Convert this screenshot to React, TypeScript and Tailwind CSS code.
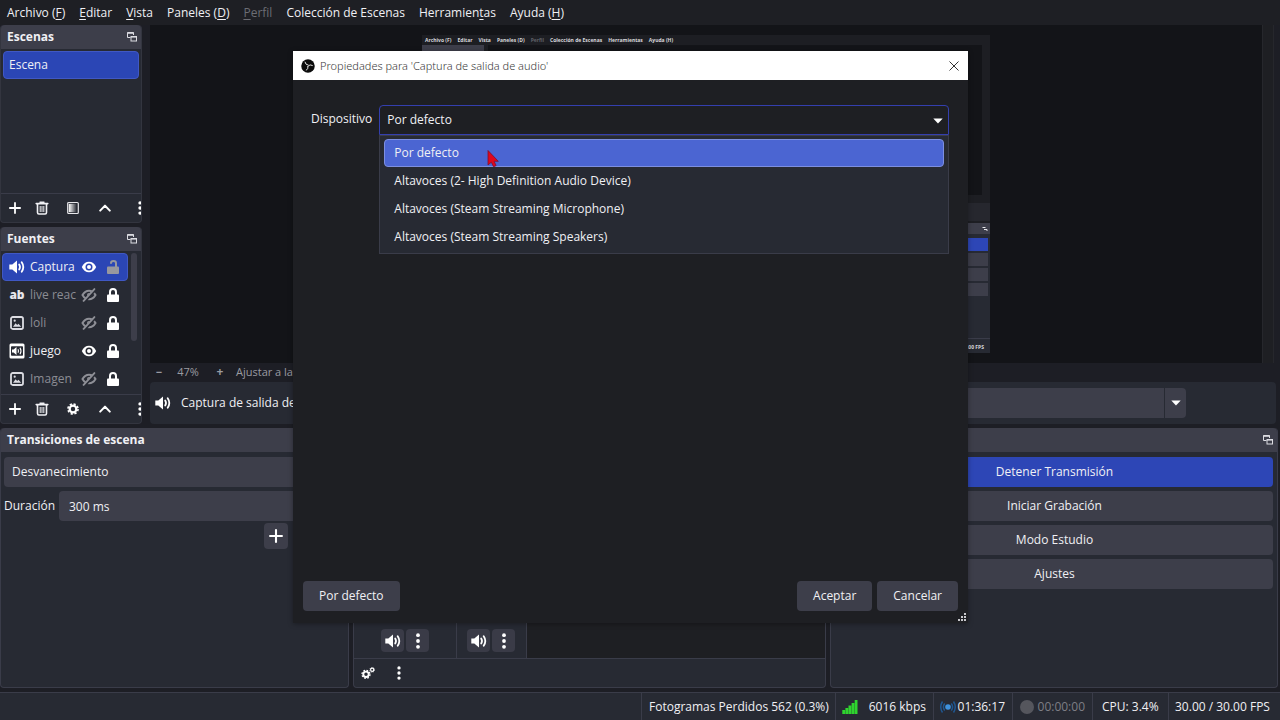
import React from "react";

type IconProps = { className?: string };

function PopOut({ className = "" }: IconProps) {
  return (
    <svg viewBox="0 0 10 10" className={`h-2.5 w-2.5 ${className}`} fill="none" stroke="#dcdce2">
      <path d="M3.5 5.5h-3v-5h6v2.5" />
      <path d="M0.5 1h6" strokeWidth="1.6" />
      <rect x="4" y="4.5" width="5.5" height="4.5" />
      <path d="M4 4.8h5.5" strokeWidth="1.6" />
    </svg>
  );
}

function Plus({ className = "h-3 w-3" }: IconProps) {
  return (
    <svg viewBox="0 0 12 12" className={className} stroke="#fff" strokeWidth="1.8" strokeLinecap="round">
      <path d="M6 .9v10.2M.9 6h10.2" />
    </svg>
  );
}

function Trash() {
  return (
    <svg viewBox="0 0 14 14" className="h-3.5 w-3.5" fill="none" stroke="#f0f0f4">
      <path d="M1.2 2.6h11.6" strokeWidth="1.6" strokeLinecap="round" />
      <path d="M5 1.2h4" strokeWidth="1.4" strokeLinecap="round" />
      <path d="M2.5 3v8.6q0 1.4 1.4 1.4h6.2q1.4 0 1.4-1.4V3" strokeWidth="1.6" />
      <path d="M5.2 5v6M7 5v6M8.8 5v6" strokeWidth="1" />
    </svg>
  );
}

function Filter() {
  return (
    <svg viewBox="0 0 14 14" className="h-3.5 w-3.5">
      <defs>
        <linearGradient id="fade">
          <stop offset="0" stopColor="#fff" />
          <stop offset="1" stopColor="#272a33" />
        </linearGradient>
      </defs>
      <rect x="1.7" y="1.5" width="10.6" height="11" rx="1" fill="#272a33" stroke="#e6e6ea" strokeWidth="1.2" />
      <rect x="2.8" y="2.8" width="8" height="8.4" fill="url(#fade)" />
    </svg>
  );
}

function ChevronUp() {
  return (
    <svg viewBox="0 0 12 8" className="h-2 w-3" fill="none" stroke="#fff" strokeWidth="2" strokeLinecap="round" strokeLinejoin="round">
      <path d="M1.2 6.6 6 1.6l4.8 5" />
    </svg>
  );
}

function Dots({ className = "h-3.5 w-1" }: IconProps) {
  return (
    <svg viewBox="0 0 4 16" className={className} fill="#fff">
      <circle cx="2" cy="2.2" r="1.9" />
      <circle cx="2" cy="8" r="1.9" />
      <circle cx="2" cy="13.8" r="1.9" />
    </svg>
  );
}

function Gear({ className = "h-3 w-3" }: IconProps) {
  return (
    <svg viewBox="0 0 14 14" className={className} fill="none" stroke="#fff">
      <circle cx="7" cy="7" r="3.9" strokeWidth="2.6" />
      <circle cx="7" cy="7" r="5.9" strokeWidth="1.8" strokeDasharray="2.6 2.03" />
    </svg>
  );
}

function Gears() {
  return (
    <svg viewBox="0 0 14 12" className="h-3 w-3.5" fill="none" stroke="#fff">
      <circle cx="5" cy="7.3" r="2.7" strokeWidth="1.9" />
      <circle cx="5" cy="7.3" r="4" strokeWidth="1.3" strokeDasharray="1.7 1.44" />
      <circle cx="11.2" cy="2.8" r="1.6" strokeWidth="1.2" />
      <circle cx="11.2" cy="2.8" r="2.4" strokeWidth=".7" strokeDasharray="1 .88" />
    </svg>
  );
}

function Speaker() {
  return (
    <svg viewBox="0 0 16 14" className="h-3.5 w-4 shrink-0" fill="none" stroke="#fff" strokeLinecap="round">
      <path d="M.3 4.4h3L8 .6v12.8L3.300 9.600h-3z" fill="#fff" stroke="none" />
      <path d="M10.200 4.500q1.600 2.500 0 5" strokeWidth="1.800" />
      <path d="M12.700 2.300q3.200 4.700 0 9.400" strokeWidth="1.800" />
    </svg>
  );
}

function BoxSpeaker() {
  return (
    <svg viewBox="0 0 16 16" className="h-4 w-4 shrink-0">
      <rect x=".5" y=".5" width="15" height="15" rx="1.500" fill="#fff" />
      <rect x="2" y="3.200" width="12" height="9.600" rx=".8" fill="#272a33" />
      <path d="M3 6.500h1.600L7.500 4v8L4.600 9.500H3z" fill="#fff" />
      <path d="M9 6.200q1 1.800 0 3.600M11 4.800q2 3.200 0 6.400" fill="none" stroke="#fff" strokeWidth="1.100" />
    </svg>
  );
}

function Picture() {
  return (
    <svg viewBox="0 0 16 16" className="h-4 w-4 shrink-0" fill="none" stroke="#dcdce2">
      <rect x="2" y="2" width="12" height="12" rx="1.800" strokeWidth="1.800" />
      <path d="m4 11.800 2.600-3.600 1.600 1.700 1.200-1.200 2.800 3.100z" fill="#dcdce2" stroke="none" />
      <circle cx="5.700" cy="5.700" r="1.100" fill="#dcdce2" stroke="none" />
    </svg>
  );
}

function Eye({ back }: { back: string }) {
  return (
    <svg viewBox="0 0 16 12" className="h-3 w-4 shrink-0">
      <path d="M.8 6q2.500-5.300 7.200-5.300T15.200 6q-2.500 5.300-7.200 5.300T.8 6z" fill="#fff" />
      <circle cx="8" cy="6" r="3.500" fill={back} />
      <circle cx="8" cy="6" r="2" fill="#fff" />
    </svg>
  );
}

function EyeOff() {
  return (
    <svg viewBox="0 0 16 14" className="h-3.5 w-4 shrink-0" fill="none" stroke="#8e8f96">
      <path d="M1.500 7q2.400-4.300 6.500-4.300t6.500 4.300q-2.400 4.300-6.500 4.300T1.500 7z" strokeWidth="2" />
      <circle cx="8" cy="7" r="2" fill="#8e8f96" stroke="none" />
      <path d="M3.500 13.300 14.400 1.500" stroke="#272a33" strokeWidth="3" />
      <path d="M2.600 12.900 13.400 1.100" strokeWidth="1.900" strokeLinecap="round" />
    </svg>
  );
}

function Lock({ open = false }: { open?: boolean }) {
  const color = open ? "#98989e" : "#fff";
  return (
    <svg viewBox="0 0 12 14" className="h-3.5 w-3 shrink-0" fill="none">
      <rect x="0" y="6.500" width="12" height="7.500" rx="1" fill={color} />
      <path d={open ? "M4 3.800V3q0-2 2.500-2T9 3.300V7" : "M3 7V4q0-3 3-3t3 3v3"} stroke={color} strokeWidth="2" />
    </svg>
  );
}

function ObsLogo() {
  return (
    <svg viewBox="0 0 16 16" className="h-3.5 w-3.5 shrink-0">
      <circle cx="8" cy="8" r="7.700" fill="#0c0c0c" />
      <g fill="none" stroke="#e8e8e8" strokeWidth="1.100" strokeLinecap="round">
        <path d="M4.600 3.600q.2 3 3.600 3.400" />
        <path d="M13 7.300q-2.800-1.800-4.900.8" />
        <path d="M6 12.800q3-1.300 1.900-4.400" />
      </g>
    </svg>
  );
}

function Header({ title, icon = true }: { title: string; icon?: boolean }) {
  return (
    <header className="flex h-6 shrink-0 items-center justify-between rounded-t-sm bg-[#3d3e4a] pr-1 pl-1.5">
      <h2 className="font-bold">{title}</h2>
      {icon && (
        <button aria-label={`Desacoplar ${title}`}>
          <PopOut />
        </button>
      )}
    </header>
  );
}

function Toolbar({ children }: { children: React.ReactNode }) {
  return (
    <div className="flex h-[29px] shrink-0 items-center overflow-hidden border-t border-[#3a3c49]">{children}</div>
  );
}

function Tool({ label, children, className = "w-[27px]" }: { label: string; children: React.ReactNode; className?: string }) {
  return (
    <button aria-label={label} className={`flex h-7 shrink-0 items-center justify-center ${className}`}>
      {children}
    </button>
  );
}

function Square({ label, children }: { label: string; children: React.ReactNode }) {
  return (
    <button aria-label={label} className="flex h-[23px] w-[23px] items-center justify-center rounded bg-[#3a3b47]">
      {children}
    </button>
  );
}

const menus = [
  { pre: "Archivo (", key: "F", post: ")" },
  { pre: "", key: "E", post: "ditar" },
  { pre: "", key: "V", post: "ista" },
  { pre: "Paneles (", key: "D", post: ")" },
  { pre: "", key: "P", post: "erfil", off: true },
  { pre: "Colección de Escenas", key: "", post: "" },
  { pre: "Herramien", key: "t", post: "as" },
  { pre: "Ayuda (", key: "H", post: ")" },
];

const sources = [
  { name: "Captura", icon: <Speaker />, on: true, open: true, selected: true },
  { name: "live reac", icon: <span className="w-4 text-center text-xs font-extrabold text-[#e6e6ea]">ab</span>, on: false },
  { name: "loli", icon: <Picture />, on: false },
  { name: "juego", icon: <BoxSpeaker />, on: true },
  { name: "Imagen", icon: <Picture />, on: false },
];

const devices = [
  "Por defecto",
  "Altavoces (2- High Definition Audio Device)",
  "Altavoces (Steam Streaming Microphone)",
  "Altavoces (Steam Streaming Speakers)",
];

function MiniScene() {
  return (
    <div className="mt-2.5 flex h-[318px] w-[568px] flex-col overflow-hidden bg-[#1d1e23]">
      <div className="flex h-2.5 shrink-0 items-center gap-[6px] pl-[3px] text-[5px] leading-none font-bold whitespace-nowrap text-[#d8d8dc]">
        {menus.map((m) => (
          <span key={m.pre + m.post} className={m.off ? "text-[#606168]" : ""}>
            {m.pre + m.key + m.post}
          </span>
        ))}
      </div>
      <div className="flex h-[150px] shrink-0 gap-1">
        <div className="w-[62px] bg-[#272a33]">
          <div className="h-2.5 bg-[#3d3e4a]" />
        </div>
        <div className="mr-2 flex-1 bg-[#131418]" />
      </div>
      <div className="mt-2 h-[18px] shrink-0 bg-[#26272e]" />
      <div className="mt-0.5 flex flex-1 justify-end bg-[#272a33]">
        <div className="flex w-[200px] flex-col gap-0.5">
          <div className="mb-0.5 flex h-[11px] items-center justify-end bg-[#3d3e4a] pr-0.5">
            <svg viewBox="0 0 6 6" className="h-1.5 w-1.5" fill="none" stroke="#e6e6ea">
              <path d="M.5 1.500h3M2 3.500h3v1.500" />
            </svg>
          </div>
          <div className="mr-0.5 h-[13px] bg-[#2d46b6]" />
          <div className="mr-0.5 h-[13px] bg-[#3d3e4a]" />
          <div className="mr-0.5 h-[13px] bg-[#3d3e4a]" />
          <div className="mr-0.5 h-[13px] bg-[#3d3e4a]" />
        </div>
      </div>
      <div className="h-[15px] shrink-0 border-t border-[#3a3c49] bg-[#272a33] pt-1.5 pr-1.5 text-right text-[5px] leading-none font-bold text-[#d8d8dc]">
        30.00 / 30.00 FPS
      </div>
    </div>
  );
}

function Dialog() {
  return (
    <section
      role="dialog"
      aria-labelledby="dialog-title"
      className="absolute top-[51px] left-[293px] flex h-[572px] w-[675px] flex-col bg-[#1e1f23] shadow-[0_1px_5px_rgba(0,0,0,0.35)]"
    >
      <header className="flex h-[29px] shrink-0 items-center bg-white pr-2 pl-2 text-[#3a3a3a]">
        <ObsLogo />
        <h1 id="dialog-title" className="ml-[5px] flex-1 font-['Noto_Sans',sans-serif] text-[11px] font-light">
          Propiedades para 'Captura de salida de audio'
        </h1>
        <button aria-label="Cerrar" className="flex h-5 w-3 items-center justify-center">
          <svg viewBox="0 0 10 10" className="h-2.5 w-2.5" stroke="#333" strokeWidth="1">
            <path d="M.5.5l9 9M9.500.5l-9 9" />
          </svg>
        </button>
      </header>
      <div className="flex flex-1 items-start gap-[7px] pt-[25px] pr-[19px] pl-[18px]">
        <label htmlFor="device" className="pt-1 leading-5">
          Dispositivo
        </label>
        <div className="relative flex-1">
          <select
            id="device"
            defaultValue="Por defecto"
            className="block h-[30px] w-full appearance-none rounded-t border border-[#343fae] bg-[#1e1f23] pl-[7px] outline-none"
          >
            {devices.map((d) => (
              <option key={d}>{d}</option>
            ))}
          </select>
          <svg viewBox="0 0 10 6" className="pointer-events-none absolute top-[13px] right-1.5 h-1.5 w-2.5" fill="#fff">
            <path d="M.3.5h9.400L5 5.500z" />
          </svg>
          <ul role="listbox" className="absolute top-[30px] right-0 left-0 border border-[#3a3c49] bg-[#272a33] px-1 pt-[3px] pb-0.5">
            {devices.map((d, i) => (
              <li
                key={d}
                role="option"
                aria-selected={i === 0}
                className={`flex h-7 items-center rounded border pl-[9px] ${i === 0 ? "border-[#7d8fe0] bg-[#4b65d2]" : "border-transparent"}`}
              >
                {d}
              </li>
            ))}
          </ul>
          <svg viewBox="0 0 12 18" className="absolute top-[45px] left-[108px] h-[18px] w-3">
            <path d="M1 .5v14.500l3.300-2.800 2.300 4.600 2.500-1.200-2-4.300h4.200z" fill="#e0061c" stroke="#7d1030" strokeWidth=".8" />
          </svg>
        </div>
      </div>
      <footer className="flex items-center gap-[5px] px-2.5 pb-3">
        <button className="h-[30px] rounded bg-[#3d3e4a] px-4">Por defecto</button>
        <span className="flex-1" />
        <button className="h-[30px] rounded bg-[#3d3e4a] px-4">Aceptar</button>
        <button className="h-[30px] rounded bg-[#3d3e4a] px-4">Cancelar</button>
      </footer>
      <svg viewBox="0 0 8 8" className="absolute right-0.5 bottom-0.5 h-2 w-2" fill="#c8c8cc">
        <path d="M6 0h2v2H6zM3 3h2v2H3zM6 3h2v2H6zM0 6h2v2H0zM3 6h2v2H3zM6 6h2v2H6z" />
      </svg>
    </section>
  );
}

export default function App() {
  return (
    <div className="relative flex min-h-screen flex-col overflow-hidden bg-[#1d1e25] font-['Open_Sans','Noto_Sans',sans-serif] text-xs leading-4 text-[#f0f0f4]">
      <nav className="flex h-[25px] shrink-0 items-center gap-3.5 bg-[#1e1f24] pl-[7px]">
        {menus.map((m) => (
          <button key={m.pre + m.post} disabled={m.off} className={`whitespace-nowrap ${m.off ? "text-[#6c6d74]" : ""}`}>
            {m.pre}
            <u className="underline-offset-2">{m.key}</u>
            {m.post}
          </button>
        ))}
      </nav>

      <main className="flex h-[399px] shrink-0 gap-2">
        <aside className="flex w-[142px] shrink-0 flex-col gap-1">
          <section className="flex h-[198px] flex-col rounded border border-t-0 border-[#33353f] bg-[#272a33]">
            <Header title="Escenas" />
            <div className="flex-1 px-0.5 pt-0.5">
              <button className="flex h-7 w-full items-center rounded border border-[#4058c4] bg-[#2b46b5] pl-[5px]">Escena</button>
            </div>
            <Toolbar>
              <Tool label="Añadir escena"><Plus /></Tool>
              <Tool label="Eliminar escena"><Trash /></Tool>
              <Tool label="Filtros" className="w-9"><Filter /></Tool>
              <Tool label="Subir escena"><ChevronUp /></Tool>
              <Tool label="Más opciones" className="ml-5 w-1"><Dots /></Tool>
            </Toolbar>
          </section>
          <section className="flex h-[197px] flex-col rounded border border-t-0 border-[#33353f] bg-[#272a33]">
            <Header title="Fuentes" />
            <div className="flex min-h-0 flex-1 overflow-hidden pt-0.5">
              <ul className="w-[127px] shrink-0 pl-px">
                {sources.map((s) => (
                  <li
                    key={s.name}
                    className={`flex h-7 items-center rounded border pr-2 pl-1.5 ${s.selected ? "border-[#4058c4] bg-[#2b46b5]" : "border-transparent"}`}
                  >
                    {s.icon}
                    <span className={`ml-[5px] flex-1 whitespace-nowrap ${s.on ? "" : "text-[#8b8c93]"}`}>{s.name}</span>
                    <button aria-label="Visibilidad" className="mr-2.5 w-4">{s.on ? <Eye back={s.selected ? "#2b46b5" : "#272a33"} /> : <EyeOff />}</button>
                    <button aria-label="Bloqueo" className="w-3"><Lock open={s.open} /></button>
                  </li>
                ))}
              </ul>
              <div className="ml-[3px] h-[88px] w-1.5 rounded-sm bg-[#3d3e4a]" />
            </div>
            <Toolbar>
              <Tool label="Añadir fuente"><Plus /></Tool>
              <Tool label="Eliminar fuente"><Trash /></Tool>
              <Tool label="Propiedades" className="w-9"><Gear /></Tool>
              <Tool label="Subir fuente"><ChevronUp /></Tool>
              <Tool label="Más opciones" className="ml-5 w-1"><Dots /></Tool>
            </Toolbar>
          </section>
        </aside>

        <div className="flex min-w-0 flex-1 flex-col">
          <div className="flex h-[338px] shrink-0">
            <div className="flex flex-1 justify-center bg-[#131418]">
              <MiniScene />
            </div>
            <div className="mr-1.5 w-3 border-x border-[#26272c] bg-[#1e1f23]" />
          </div>
          <div className="mb-px flex h-[18px] items-center text-[11px] text-[#9a9ba1]">
            <button aria-label="Alejar" className="ml-1 w-2.5 font-bold">−</button>
            <span className="w-12 text-center">47%</span>
            <button aria-label="Acercar" className="w-4 text-xs font-bold">+</button>
            <span className="ml-2 whitespace-nowrap">Ajustar a la ventana</span>
          </div>
          <div className="mr-1 flex h-[42px] items-center rounded bg-[#272a33] pl-[5px]">
            <Speaker />
            <span className="ml-2.5 w-[200px] shrink-0 whitespace-nowrap">Captura de salida de audio</span>
            <div className="ml-20 flex h-[30px] flex-1 justify-end rounded bg-[#3d3e4a]">
              <button aria-label="Dispositivo de audio" className="flex w-[22px] items-center justify-center border-l border-[#272a33]">
                <svg viewBox="0 0 10 6" className="h-1.5 w-2.5" fill="#fff"><path d="M.3.5h9.400L5 5.500z" /></svg>
              </button>
            </div>
            <div className="w-[90px] shrink-0" />
          </div>
        </div>
      </main>

      <div className="mt-1 flex min-h-[260px] flex-1 gap-1 pr-0.5">
        <section className="flex w-[349px] shrink-0 flex-col rounded border border-t-0 border-[#3a3c49] bg-[#272a33]">
          <Header title="Transiciones de escena" icon={false} />
          <div className="flex flex-col gap-1 px-[3px] pt-[5px]">
            <button className="h-[30px] rounded bg-[#3d3e4a] pl-2 text-left">Desvanecimiento</button>
            <div className="flex items-center gap-1">
              <label htmlFor="duration">Duración</label>
              <input id="duration" defaultValue="300 ms" className="h-[30px] min-w-0 flex-1 rounded bg-[#3d3e4a] pl-2.5" />
            </div>
          </div>
          <button aria-label="Añadir transición" className="mt-0.5 ml-[263px] flex h-[26px] w-6 items-center justify-center rounded bg-[#3d3e4a]">
            <Plus className="h-3.5 w-3.5" />
          </button>
        </section>

        <section className="flex flex-1 flex-col rounded border border-t-0 border-[#3a3c49] bg-[#272a33]">
          <Header title="Mezclador de audio" />
          <div className="flex flex-1 bg-[#1e1f23]">
            <div className="flex w-[103px] items-end justify-end gap-0.5 border-r border-[#3a3c49] bg-[#272a33] pr-[27px] pb-1.5">
              <Square label="Silenciar escritorio"><Speaker /></Square>
              <Square label="Opciones de escritorio"><Dots className="h-4 w-1" /></Square>
            </div>
            <div className="flex w-[70px] items-end justify-end gap-0.5 border-r border-[#3a3c49] bg-[#272a33] pr-[11px] pb-1.5">
              <Square label="Silenciar micrófono"><Speaker /></Square>
              <Square label="Opciones de micrófono"><Dots className="h-4 w-1" /></Square>
            </div>
          </div>
          <Toolbar>
            <Tool label="Propiedades avanzadas"><Gears /></Tool>
            <Tool label="Menú del mezclador" className="ml-1 w-7"><Dots /></Tool>
          </Toolbar>
        </section>

        <section className="flex w-[448px] shrink-0 flex-col rounded border border-t-0 border-[#3a3c49] bg-[#272a33]">
          <Header title="Controles" />
          <div className="flex flex-col gap-1 pt-[5px] pr-1 pl-[5px]">
            <button className="h-[30px] rounded-sm bg-[#2d46b6]">Detener Transmisión</button>
            <button className="h-[30px] rounded-sm bg-[#3d3e4a]">Iniciar Grabación</button>
            <button className="h-[30px] rounded-sm bg-[#3d3e4a]">Modo Estudio</button>
            <button className="h-[30px] rounded-sm bg-[#3d3e4a]">Ajustes</button>
          </div>
        </section>
      </div>

      <footer className="mt-1 flex h-7 shrink-0 justify-end border-t border-[#3a3c49] bg-[#272a33] whitespace-nowrap">
        <div className="flex w-[194px] items-center border-l border-[#3a3c49] pl-[7px]">Fotogramas Perdidos 562 (0.3%)</div>
        <div className="flex w-[98px] items-center justify-between border-l border-[#3a3c49] pr-[7px] pl-1.5">
          <svg viewBox="0 0 16 14" className="h-3.5 w-4" fill="#2fd42f">
            <path d="M.3 10h2.800v4H.3zM3.400 8h2.800v6H3.400zM6.500 5.500h2.800V14H6.500zM9.600 3h2.800v11H9.600zM12.700 0h2.800v14h-2.800z" />
          </svg>
          6016 kbps
        </div>
        <div className="flex w-[79px] items-center justify-between border-l border-[#3a3c49] pr-[7px] pl-1.5">
          <svg viewBox="0 0 16 14" className="h-3.5 w-4" fill="none" stroke="#1f5791" strokeWidth="1.500">
            <circle cx="8" cy="7" r="2.800" fill="#3f92dc" stroke="none" />
            <path d="M4.700 3.500q-2.600 3.500 0 7M11.300 3.500q2.600 3.500 0 7M2.500 1.500q-3.500 5.500 0 11M13.500 1.500q3.500 5.500 0 11" />
          </svg>
          01:36:17
        </div>
        <div className="flex w-20 items-center justify-between border-l border-[#3a3c49] pr-[7px] pl-[7px] text-[#7d7e85]">
          <span className="h-3.5 w-3.5 rounded-full bg-[#55565d]" />
          00:00:00
        </div>
        <div className="flex w-[76px] items-center border-l border-[#3a3c49] pl-[9px]">CPU: 3.4%</div>
        <div className="flex w-28 items-center border-l border-[#3a3c49] pl-1.5">30.00 / 30.00 FPS</div>
      </footer>

      <Dialog />
    </div>
  );
}
